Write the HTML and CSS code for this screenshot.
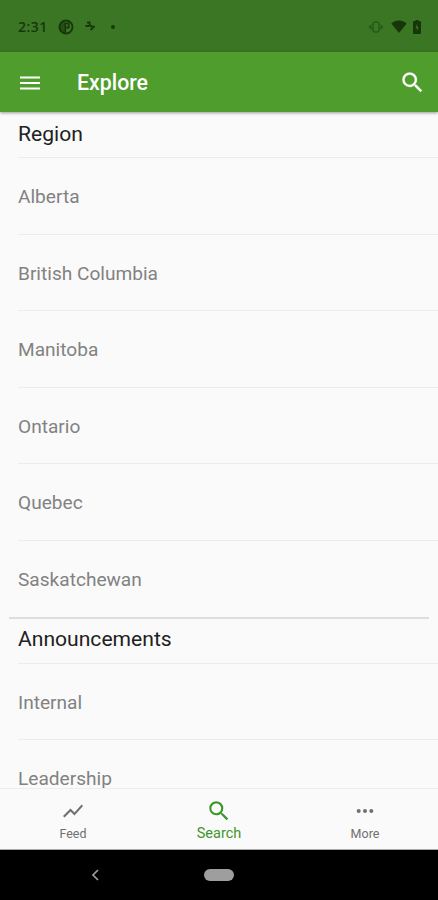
FILE: index.html
```html
<!DOCTYPE html>
<html lang="en">
<head>
<meta charset="utf-8">
<title>Explore</title>
<link rel="stylesheet" href="styles.css">
</head>
<body>
<div class="screen">
  <div class="status">
    <span class="clock">2:31</span>
    <svg class="s-app" width="16" height="16" viewBox="0 0 16 16"><circle cx="8" cy="8" r="6.500" fill="none" stroke="currentColor" stroke-width="1.900"/><path d="M6.500 2v12A6 6 0 0 1 6.500 2z" fill="currentColor" opacity=".6"/><path d="M7.200 14V4.300h3.500v4.400H7.200" fill="none" stroke="currentColor" stroke-width="1.800"/></svg>
    <svg class="s-fan" width="10" height="12" viewBox="0 0 10 12"><path d="M2 1.500h2.500L5 5M.5 5h3.800M5 5l4 .8L5.500 9" fill="none" stroke="currentColor" stroke-width="1.800"/></svg>
    <span class="s-dot"></span>
    <span class="spacer"></span>
    <svg class="s-vib" width="16" height="14" viewBox="0 0 16 14"><rect x="5" y="2" width="6" height="10" rx="2" fill="none" stroke="currentColor" stroke-width="1.600"/><path d="M3.500 4v6L.5 7zM12.500 4v6l3-3z" fill="currentColor"/></svg>
    <svg class="s-wifi" width="16" height="13" viewBox="0 0 16 13"><path d="M8 13L.3 3.500C4.500-.6 11.500-.6 15.700 3.500z" fill="currentColor"/></svg>
    <svg class="s-bat" width="8" height="14" viewBox="0 0 8 14"><path fill-rule="evenodd" d="M2.500 0h3v1H7q1 0 1 1v11q0 1-1 1H1q-1 0-1-1V2q0-1 1-1h1.500zM4 4L2.500 8h1.200L4 11 5.500 7H4.300z" fill="currentColor"/></svg>
  </div>
  <header class="appbar">
    <svg class="menu" width="20" height="14" viewBox="0 0 20 14"><path d="M0 1.500h20M0 7h20M0 12.500h20" stroke="currentColor" stroke-width="2"/></svg>
    <h1>Explore</h1>
    <svg class="find" width="27" height="27" viewBox="0 0 24 24"><path fill="currentColor" stroke="currentColor" stroke-width=".2" d="M15.500 14h-.79l-.28-.27A6.471 6.471 0 0 0 16 9.500 6.500 6.500 0 1 0 9.500 16c1.610 0 3.090-.59 4.230-1.570l.27.28v.79l5 4.990L20.490 19l-4.990-5zm-6 0C7.010 14 5 11.990 5 9.500S7.010 5 9.500 5 14 7.010 14 9.500 11.990 14 9.500 14z"/></svg>
  </header>
  <main class="list">
    <section>
      <h2>Region</h2>
      <ul>
        <li>Alberta</li><li>British Columbia</li><li>Manitoba</li><li>Ontario</li><li>Quebec</li><li>Saskatchewan</li>
      </ul>
    </section>
    <section class="second">
      <h2>Announcements</h2>
      <ul><li>Internal</li><li>Leadership</li></ul>
    </section>
  </main>
  <nav class="tabs">
    <a class="tab"><svg width="24" height="24" viewBox="0 0 24 24"><path fill="currentColor" d="M3.500 18.490l6-6.010 4 4L22 6.920l-1.410-1.410-7.090 7.970-4-4L2 16.990z"/></svg><span>Feed</span></a>
    <a class="tab active"><svg width="26" height="26" viewBox="0 0 24 24"><path fill="currentColor" d="M15.500 14h-.79l-.28-.27A6.471 6.471 0 0 0 16 9.500 6.500 6.500 0 1 0 9.500 16c1.610 0 3.090-.59 4.230-1.570l.27.28v.79l5 4.990L20.490 19l-4.990-5zm-6 0C7.010 14 5 11.990 5 9.500S7.010 5 9.500 5 14 7.010 14 9.500 11.990 14 9.500 14z"/></svg><span>Search</span></a>
    <a class="tab"><svg width="24" height="24" viewBox="0 0 24 24"><g fill="currentColor"><circle cx="5.700" cy="12" r="2"/><circle cx="12" cy="12" r="2"/><circle cx="18.300" cy="12" r="2"/></g></svg><span>More</span></a>
  </nav>
  <div class="sysnav">
    <svg class="back" width="8" height="12" viewBox="0 0 8 12"><path d="M7 1L2 6l5 5" fill="none" stroke="currentColor" stroke-width="1.700"/></svg>
    <span class="pill"></span>
  </div>
</div>
</body>
</html>
```
FILE: styles.css
```css
* { box-sizing: border-box; }
body { margin: 0; font-family: Roboto, "Liberation Sans", sans-serif; }
h1, h2, ul { margin: 0; padding: 0; font-weight: 400; list-style: none; }
svg { display: block; flex: none; }
.screen { width: 438px; height: 900px; display: flex; flex-direction: column; background: #fafafa; overflow: hidden; }

.status { flex: none; height: 52px; display: flex; align-items: center; padding: 1px 17px 0 18px; background: #3b7624; color: #17370b; }
.clock { width: 40px; font: 500 14px/16px "Open Sans", Roboto, sans-serif; font-weight: 600; letter-spacing: .5px; }
.s-fan { margin-left: 11px; }
.s-dot { width: 4px; height: 4px; margin-left: 16px; border-radius: 50%; background: currentColor; }
.spacer { flex: 1; }
.s-vib { color: #275b16; }
.s-wifi { margin-left: 7px; }
.s-bat { margin-left: 6px; }

.appbar { flex: none; height: 60px; display: flex; align-items: center; padding: 1px 12px 0 20px; background: #4e9d2d; color: #fff; box-shadow: 0 1px 3px rgba(0, 0, 0, .4); z-index: 1; }
.appbar h1 { flex: 1; margin-left: 37px; font-size: 21.300px; font-weight: 500; line-height: 24px; }

.list { flex: 1; min-height: 0; }
.list h2 { height: 46px; margin-left: 18px; border-bottom: 1px solid #ececec; font-size: 21.100px; line-height: 44px; color: #212121; }
.list li { height: 76.600px; margin-left: 18px; border-bottom: 1px solid #ececec; font-size: 19.100px; line-height: 78px; color: #828282; }
.list section li:last-child { border-bottom: 0; }
.second { margin-top: -1px; }
.second::before { content: ""; display: block; height: 2px; margin: 0 9px; background: #dedede; }
.second h2 { height: 45px; line-height: 40px; }
.second li { height: 76px; line-height: 77px; }

.tabs { flex: none; height: 62px; display: flex; border-top: 1px solid #eee; border-bottom: 1px solid #aaa; color: #707070; }
.tab { flex: 1; display: flex; flex-direction: column; align-items: center; padding-top: 10px; font-size: 12.500px; line-height: 16px; }
.tab span { margin-top: 3px; }
.tab.active { padding-top: 9px; color: #3f962b; font-size: 14.500px; }
.tab.active span { margin-top: 2px; }

.sysnav { flex: none; height: 50px; display: flex; align-items: center; background: #000; color: #9e9e9e; }
.back { margin-left: 91px; }
.pill { width: 30px; height: 12px; margin-left: 105px; border-radius: 6px; background: #9e9e9e; }
```
